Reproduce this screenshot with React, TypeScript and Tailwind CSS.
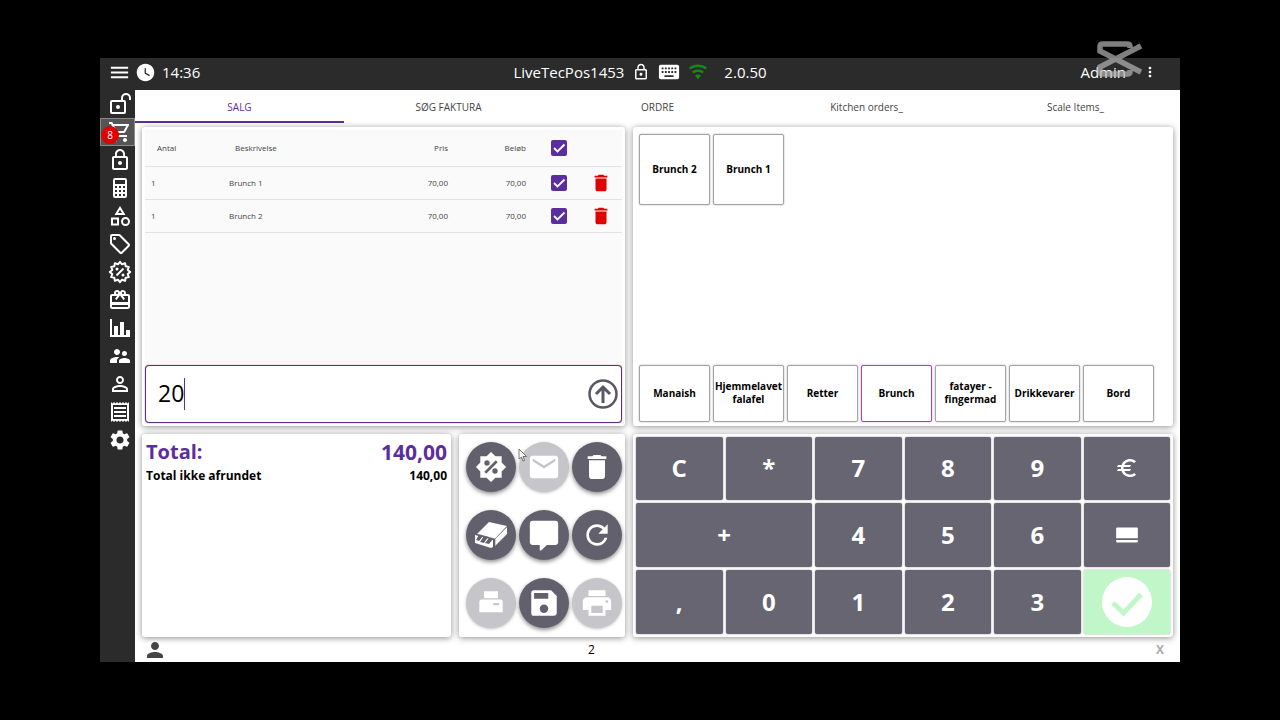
import React, { useState } from 'react';
import clsx from 'clsx';
import {
  MdCardGiftcard,
  MdDelete,
  MdEmail,
  MdEuro,
  MdLockOutline,
  MdMenu,
  MdMoreVert,
  MdOutlineCategory,
  MdOutlineShoppingCart,
  MdPerson,
  MdPersonOutline,
  MdPrint,
  MdRefresh,
  MdSave,
  MdSettings,
  MdSupervisorAccount,
  MdWatchLater,
} from 'react-icons/md';

type IconProps = { className?: string };

const makeIcon = (d: string): React.FC<IconProps> => ({ className }) => (
  <svg viewBox="0 0 24 24" fill="currentColor" className={className} aria-hidden="true">
    <path fillRule="evenodd" d={d} />
  </svg>
);

const CalculatorIcon = makeIcon(
  'M7,2H17A2,2 0 0,1 19,4V20A2,2 0 0,1 17,22H7A2,2 0 0,1 5,20V4A2,2 0 0,1 7,2M7,4V8H17V4H7M7,10V12H9V10H7M11,10V12H13V10H11M15,10V12H17V10H15M7,14V16H9V14H7M11,14V16H13V14H11M15,14V16H17V14H15M7,18V20H9V18H7M11,18V20H13V18H11M15,18V20H17V18H15Z'
);
const TagIcon = makeIcon(
  'M21.41 11.58L12.41 2.58A2 2 0 0 0 11 2H4A2 2 0 0 0 2 4V11A2 2 0 0 0 2.59 12.42L11.59 21.42A2 2 0 0 0 13 22A2 2 0 0 0 14.41 21.41L21.41 14.41A2 2 0 0 0 22 13A2 2 0 0 0 21.41 11.58M13 20L4 11V4H11L20 13ZM6.5 5A1.5 1.5 0 1 1 5 6.5A1.5 1.5 0 0 1 6.5 5Z'
);
const ChartIcon = makeIcon('M22,21H2V3H4V19H6V10H10V19H12V6H16V19H18V14H22V21Z');
const WifiIcon = makeIcon(
  'M12,21L15.6,16.2C14.6,15.45 13.35,15 12,15C10.65,15 9.4,15.45 8.4,16.2L12,21M12,3C7.95,3 4.21,4.34 1.2,6.6L3,9C5.5,7.12 8.62,6 12,6C15.38,6 18.5,7.12 21,9L22.8,6.6C19.79,4.34 16.05,3 12,3M12,9C9.3,9 6.81,9.89 4.8,11.4L6.6,13.8C8.1,12.67 9.97,12 12,12C14.03,12 15.9,12.67 17.4,13.8L19.2,11.4C17.19,9.89 14.7,9 12,9Z'
);
const KeyboardIcon = makeIcon(
  'M3 4h18a2 2 0 0 1 2 2v12a2 2 0 0 1-2 2H3a2 2 0 0 1-2-2V6a2 2 0 0 1 2-2ZM4 7v2h2V7ZM7.5 7v2h2V7ZM11 7v2h2V7ZM14.5 7v2h2V7ZM18 7v2h2V7ZM4 11v2h2v-2ZM7.5 11v2h2v-2ZM11 11v2h2v-2ZM14.5 11v2h2v-2ZM18 11v2h2v-2ZM7 15.5v2h10v-2Z'
);
const ReceiptIcon = makeIcon(
  'M3 22V2l1.5 1.5L6 2l1.5 1.5L9 2l1.5 1.5L12 2l1.5 1.5L15 2l1.5 1.5L18 2l1.5 1.5L21 2v20l-1.5-1.5L18 22l-1.5-1.5L15 22l-1.5-1.5L12 22l-1.5-1.5L9 22l-1.5-1.5L6 22l-1.5-1.5ZM5 5v14h14V5ZM6 7h12v2H6ZM6 11h12v2H6ZM6 15h12v2H6Z'
);
const UnlockIcon = makeIcon(
  'M18 1a5 5 0 0 0-5 5v2H4a2 2 0 0 0-2 2v10a2 2 0 0 0 2 2h12a2 2 0 0 0 2-2V10a2 2 0 0 0-2-2h-1V6a3 3 0 0 1 6 0v2h2V6a5 5 0 0 0-5-5ZM4 10h12v10H4ZM10 13a2 2 0 1 1 0 4a2 2 0 0 1 0-4Z'
);
const PercentStarIcon = makeIcon(
  'M20,8.69V4H15.31L12,0.69L8.69,4H4V8.69L0.69,12L4,15.31V20H8.69L12,23.31L15.31,20H20V15.31L23.31,12ZM9,7A2,2 0 1,1 9,11A2,2 0 0,1 9,7ZM15,13A2,2 0 1,1 15,17A2,2 0 0,1 15,13ZM8.41,17L7,15.59L15.59,7L17,8.41Z'
);
const CommentIcon = makeIcon(
  'M4 2h16a2 2 0 0 1 2 2v13a2 2 0 0 1-2 2h-6l-4 4h-1v-4H4a2 2 0 0 1-2-2V4a2 2 0 0 1 2-2Z'
);
const SlipPrinterIcon = makeIcon('M6 2h12v6H6ZM4 9h16a2 2 0 0 1 2 2v9H2v-9a2 2 0 0 1 2-2ZM14 12v2h5v-2Z');
const CardIcon = makeIcon('M3 5h18a1 1 0 0 1 1 1v9H2V6a1 1 0 0 1 1-1ZM2 16.5h20V18a1 1 0 0 1-1 1H3a1 1 0 0 1-1-1Z');

const BadgePercentIcon: React.FC<IconProps> = ({ className }) => {
  const points = Array.from({ length: 24 }, (_, i) => {
    const r = i % 2 === 0 ? 10.2 : 8;
    const a = (i * Math.PI) / 12;
    return `${12 + r * Math.sin(a)},${12 - r * Math.cos(a)}`;
  }).join(' ');
  return (
    <svg viewBox="0 0 24 24" fill="none" stroke="currentColor" strokeWidth="2" strokeLinejoin="round" className={className} aria-hidden="true">
      <polygon points={points} />
      <path d="M8.5 15.5l7-7" />
      <circle cx="9" cy="9" r="1.5" fill="currentColor" stroke="none" />
      <circle cx="15" cy="15" r="1.5" fill="currentColor" stroke="none" />
    </svg>
  );
};

const DrawerIcon: React.FC<IconProps> = ({ className }) => (
  <svg viewBox="0 0 36 30" className={className} aria-hidden="true">
    <path d="M16 2l18 4-12 13-18-5z" fill="#fff" />
    <path d="M34 7v7L22 26v-7z" fill="#fff" />
    <path d="M2 15l18 5v7l-2 1-16-5z" fill="#fff" />
    <path d="M6 15l4 1-4 5-3-1zM11 16l4 1-4 6-4-1zM16 18l4 1-4 5-4-1z" fill="#63606e" />
    <path d="M4 14l18 5L34 6.5M22 19V26" fill="none" stroke="#63606e" strokeWidth=".6" />
  </svg>
);

const ConfirmIcon: React.FC<IconProps> = ({ className }) => (
  <svg viewBox="0 0 50 50" className={className} aria-hidden="true">
    <circle cx="25" cy="25" r="25" fill="#fff" />
    <path d="M11 26l10.5 10L39 17.5" fill="none" stroke="#c1f7c8" strokeWidth="5" />
  </svg>
);

const navItems = [
  { label: 'Unlock', icon: UnlockIcon },
  { label: 'Cart', icon: MdOutlineShoppingCart, badge: 8 },
  { label: 'Lock', icon: MdLockOutline },
  { label: 'Calculator', icon: CalculatorIcon },
  { label: 'Categories', icon: MdOutlineCategory },
  { label: 'Prices', icon: TagIcon },
  { label: 'Discounts', icon: BadgePercentIcon },
  { label: 'Gift cards', icon: MdCardGiftcard },
  { label: 'Reports', icon: ChartIcon },
  { label: 'Staff', icon: MdSupervisorAccount },
  { label: 'Customer', icon: MdPersonOutline },
  { label: 'Receipts', icon: ReceiptIcon },
  { label: 'Settings', icon: MdSettings },
];

const tabs = ['SALG', 'SØG FAKTURA', 'ORDRE', 'Kitchen orders_', 'Scale Items_'];

const orderLines = [
  { qty: 1, name: 'Brunch 1', price: '70,00', amount: '70,00' },
  { qty: 1, name: 'Brunch 2', price: '70,00', amount: '70,00' },
];

const products = ['Brunch 2', 'Brunch 1'];
const categories = ['Manaish', 'Hjemmelavet falafel', 'Retter', 'Brunch', 'fatayer - fingermad', 'Drikkevarer', 'Bord'];

const actions = [
  { label: 'Discount', icon: PercentStarIcon, size: 'size-8' },
  { label: 'Send mail', icon: MdEmail, size: 'size-[34px]', disabled: true },
  { label: 'Delete order', icon: MdDelete, size: 'size-8' },
  { label: 'Open drawer', icon: DrawerIcon, size: 'w-9 h-[30px]' },
  { label: 'Comment', icon: CommentIcon, size: 'size-[34px]' },
  { label: 'Refresh', icon: MdRefresh, size: 'size-8' },
  { label: 'Print slip', icon: SlipPrinterIcon, size: 'size-7', disabled: true },
  { label: 'Save', icon: MdSave, size: 'size-[34px]' },
  { label: 'Print', icon: MdPrint, size: 'size-[34px]', disabled: true },
];

const keys: { id: string; icon?: React.ReactNode; className?: string }[] = [
  { id: 'C' },
  { id: '*' },
  { id: '7' },
  { id: '8' },
  { id: '9' },
  { id: 'Euro', icon: <MdEuro className="size-6" /> },
  { id: '+', className: 'col-span-2' },
  { id: '4' },
  { id: '5' },
  { id: '6' },
  { id: 'Card', icon: <CardIcon className="size-[26px]" /> },
  { id: ',' },
  { id: '0' },
  { id: '1' },
  { id: '2' },
  { id: '3' },
  { id: 'Confirm', icon: <ConfirmIcon className="size-[50px]" />, className: 'bg-[#c1f7c8]' },
];

const card = 'rounded-[3px] bg-white shadow-[0_1px_6px_rgba(0,0,0,0.45)]';

const CheckBox: React.FC<{ label: string }> = ({ label }) => (
  <label className="relative mx-auto block size-4">
    <input type="checkbox" defaultChecked aria-label={label} className="peer block size-4 appearance-none rounded-[2px] bg-[#c4c4c4] checked:bg-[#5c2d9f]" />
    <svg viewBox="0 0 16 16" className="pointer-events-none absolute inset-0 hidden peer-checked:block" aria-hidden="true">
      <path d="M3 8l3.5 3.5L13.5 4.5" fill="none" stroke="#fff" strokeWidth="1.8" />
    </svg>
  </label>
);

const Tile: React.FC<{ label: string; active?: boolean; className?: string; onClick?: () => void }> = ({ label, active, className, onClick }) => (
  <button
    type="button"
    onClick={onClick}
    className={clsx(
      'flex w-[71px] items-center justify-center rounded-[2px] border bg-white text-center text-[10px] leading-[13px] font-bold text-black',
      active ? 'border-[#a044c8] shadow-[0_0_2px_rgba(160,68,200,0.5)]' : 'border-[#a3a3a3] shadow-[0_0_2px_rgba(0,0,0,0.3)]',
      className
    )}
  >
    {label}
  </button>
);

const TopBar: React.FC = () => (
  <header className="grid h-8 grid-cols-[1fr_auto_1fr] items-center bg-[#2b2b2b] px-2 pb-1 text-[15px] text-white">
    <div className="flex items-center gap-1">
      <button type="button" aria-label="Menu"><MdMenu className="size-[23px]" /></button>
      <MdWatchLater className="size-[21px]" />
      <span className="pl-0.5">14:36</span>
    </div>
    <div className="flex items-center gap-2">
      <span>LiveTecPos1453</span>
      <MdLockOutline className="size-[18px]" />
      <KeyboardIcon className="size-[22px]" />
      <WifiIcon className="size-5 text-[#138a13]" />
      <span className="pl-2">2.0.50</span>
    </div>
    <div className="flex items-center justify-end gap-4 pr-3.5">
      <span>Admin</span>
      <button type="button" aria-label="More"><MdMoreVert className="size-4" /></button>
    </div>
  </header>
);

const SideNav: React.FC = () => (
  <nav className="flex w-[35px] flex-col bg-[#2b2b2b] text-white">
    {navItems.map(({ label, icon: Icon, badge }) => (
      <button
        key={label}
        type="button"
        aria-label={label}
        className={clsx('relative flex h-7 items-center justify-end border pr-0.5', badge ? 'border-[#8a8a8a] bg-[#555]' : 'border-transparent')}
      >
        <Icon className="size-6" />
        {badge && (
          <span className="absolute top-[7px] left-0 flex size-[18px] items-center justify-center rounded-full bg-[#e00000] text-[10px]">{badge}</span>
        )}
      </button>
    ))}
  </nav>
);

const OrderTable: React.FC = () => (
  <table className="w-full table-fixed text-[8px] text-[#444]">
    <thead>
      <tr className="h-9 border-b border-[#e2e2e2] text-left">
        <th className="w-[78px] pl-3 font-medium">Antal</th>
        <th className="pl-3 font-medium">Beskrivelse</th>
        <th className="w-[74px] pr-1.5 text-right font-medium">Pris</th>
        <th className="w-[84px] pr-3 text-right font-medium">Beløb</th>
        <th className="w-[42px]"><CheckBox label="Select all" /></th>
        <th className="w-[42px]" />
      </tr>
    </thead>
    <tbody>
      {orderLines.map((line) => (
        <tr key={line.name} className="h-[33px] border-b border-[#e2e2e2]">
          <td className="pl-1.5">{line.qty}</td>
          <td className="pl-1.5">{line.name}</td>
          <td className="pr-1.5 text-right">{line.price}</td>
          <td className="pr-3 text-right">{line.amount}</td>
          <td><CheckBox label={line.name} /></td>
          <td>
            <button type="button" aria-label={`Delete ${line.name}`} className="mx-auto block text-[#e00000]">
              <MdDelete className="size-[22px]" />
            </button>
          </td>
        </tr>
      ))}
    </tbody>
  </table>
);

const App: React.FC = () => {
  const [activeTab, setActiveTab] = useState('SALG');
  const [category, setCategory] = useState('Brunch');
  const [entry, setEntry] = useState('20');

  return (
    <div className="relative flex min-h-screen flex-col bg-black px-[100px] py-[58px] font-['Open_Sans','Noto_Sans',sans-serif]">
      <TopBar />
      <div className="flex flex-1 bg-white">
        <SideNav />
        <div className="flex min-w-0 flex-1 flex-col">
          <div role="tablist" className="flex h-[33px]">
            {tabs.map((tab) => (
              <button
                key={tab}
                type="button"
                role="tab"
                aria-selected={tab === activeTab}
                onClick={() => setActiveTab(tab)}
                className={clsx(
                  'flex-1 border-b-2 pt-1 text-[10px] font-medium',
                  tab === activeTab ? 'border-[#5c2d9f] text-[#5c2d9f]' : 'border-transparent text-[#444]'
                )}
              >
                {tab}
              </button>
            ))}
          </div>

          <main className="grid flex-1 grid-cols-[483fr_540fr] grid-rows-[298fr_203fr] gap-2 px-[7px] pt-1">
            <section className={clsx(card, 'flex flex-col p-[3px]')}>
              <div className="flex-1 bg-[#fafafa]">
                <OrderTable />
              </div>
              <div className="relative flex h-[58px] items-center rounded-[4px] border border-[#5c2d80] bg-white pr-[3px] pl-3 shadow-[0_0_1px_#5c2d80]">
                <input
                  aria-label="Entry"
                  value={entry}
                  onChange={(e) => setEntry(e.target.value)}
                  className="min-w-0 flex-1 text-[23px] text-black outline-none"
                />
                <span className="pointer-events-none absolute left-[38px] h-8 w-px bg-[#5c2d9f]" />
                <button type="button" aria-label="Submit" className="text-[#5a5763]">
                  <svg viewBox="0 0 30 30" fill="none" stroke="currentColor" strokeWidth="2.5" className="size-[30px]" aria-hidden="true">
                    <circle cx="15" cy="15" r="13.5" />
                    <path d="M15 24V8M8 15l7-7 7 7" strokeWidth="3" />
                  </svg>
                </button>
              </div>
            </section>

            <section className={clsx(card, 'flex flex-col justify-between px-1.5 pt-[7px] pb-1')}>
              <div className="flex flex-wrap gap-[3px]">
                {products.map((name) => (
                  <Tile key={name} label={name} className="h-[71px]" />
                ))}
              </div>
              <div className="flex flex-wrap gap-[3px]">
                {categories.map((name) => (
                  <Tile key={name} label={name} active={name === category} onClick={() => setCategory(name)} className="h-[57px]" />
                ))}
              </div>
            </section>

            <div className="flex gap-2">
              <section className={clsx(card, 'flex-1 px-1 pt-1')}>
                <div className="flex justify-between text-[21px] leading-7 font-bold text-[#5c2d9f]">
                  <span className="text-xl">Total:</span>
                  <span>140,00</span>
                </div>
                <div className="flex justify-between text-xs leading-5 font-bold text-black">
                  <span>Total ikke afrundet</span>
                  <span>140,00</span>
                </div>
              </section>
              <section className={clsx(card, 'grid w-[166px] grid-cols-3 grid-rows-3 items-center gap-x-[3px] pr-[3px] pl-[7px]')}>
                {actions.map(({ label, icon: Icon, size, disabled }) => (
                  <button
                    key={label}
                    type="button"
                    aria-label={label}
                    disabled={disabled}
                    className={clsx(
                      'flex size-[50px] items-center justify-center rounded-full text-white',
                      disabled ? 'bg-[#c6c5c9] shadow-[0_1px_3px_rgba(0,0,0,0.25)]' : 'bg-[#63606e] shadow-[0_2px_4px_rgba(0,0,0,0.45)]'
                    )}
                  >
                    <Icon className={size} />
                  </button>
                ))}
              </section>
            </div>

            <section className={clsx(card, 'grid grid-cols-6 grid-rows-3 gap-[3px] p-[3px]')}>
              {keys.map(({ id, icon, className }) => (
                <button
                  key={id}
                  type="button"
                  aria-label={id}
                  className={clsx(
                    'flex items-center justify-center rounded-[2px] text-2xl font-bold text-white shadow-[0_0_2px_rgba(0,0,0,0.4)]',
                    className,
                    id !== 'Confirm' && 'bg-[#686572]'
                  )}
                >
                  {icon ?? id}
                </button>
              ))}
            </section>
          </main>

          <footer className="grid h-[25px] grid-cols-3 items-center px-2 text-xs text-black">
            <MdPerson className="size-6 text-[#444]" />
            <span className="pr-[132px] text-center">2</span>
            <span className="pr-2 text-right font-bold text-[#aaa]">X</span>
          </footer>
        </div>
      </div>

      <svg viewBox="0 0 46 40" fill="none" stroke="#b5b5b5" strokeWidth="5.5" className="pointer-events-none absolute top-[39px] right-[138px] h-10 w-[46px] opacity-70" aria-hidden="true">
        <path d="M34 9V7Q34 5 31 5H7Q4 5 4 7V12L45 33M34 31V33Q34 35 31 35H7Q4 35 4 33V28L45 7" />
      </svg>
      <svg viewBox="0 0 10 14" className="pointer-events-none absolute top-[448px] left-[518px] h-3.5 w-2.5" aria-hidden="true">
        <path d="M1 1v10l2.5-2 1.5 4 1.5-.7L5 8.5h3.5z" fill="#fff" stroke="#555" strokeWidth=".8" />
      </svg>
    </div>
  );
};

export default App;
